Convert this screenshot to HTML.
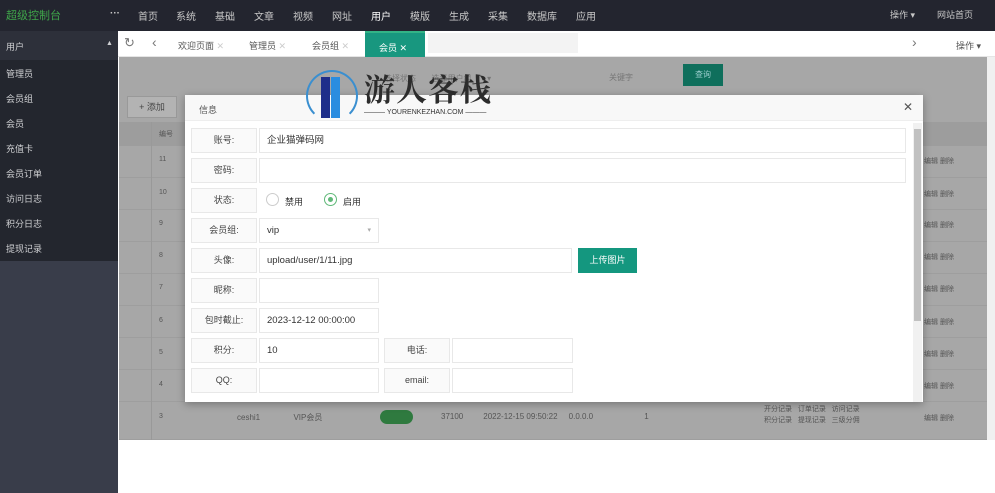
<!DOCTYPE html>
<html><head><meta charset="utf-8"><style>
*{margin:0;padding:0;box-sizing:border-box}
body{width:995px;height:493px;overflow:hidden;position:relative;background:#fff;font-family:"Liberation Sans","Noto Sans CJK SC",sans-serif;font-size:9px;color:#333}
.a{position:absolute}
.top{left:0;top:0;width:995px;height:31px;background:#23252f;color:#c8c8c8}
.top span{position:absolute;top:8px;font-size:10px}
.side{left:0;top:31px;width:118px;height:462px;background:#393d4a}
.side1{left:0;top:31px;width:118px;height:230px;background:#23262e}
.side1 div{position:absolute;left:6px;color:#cfd0d3;font-size:9px}
.tabs{left:118px;top:31px;width:877px;height:26px;background:#fff;border-bottom:1px solid #e5e5e5}
.tabs span{position:absolute;top:8px;font-size:9px;color:#555}
.gray{left:119px;top:57px;width:868px;height:383px;background:#a7a7a7}
.trow{position:absolute;left:0;width:868px;height:32px;border-bottom:1px solid #9e9e9e}
.n{position:absolute;left:40px;color:#555;font-size:7px}
.e{position:absolute;left:805px;color:#555;font-size:7px}
.modal{left:185px;top:95px;width:738px;height:307px;background:#fff;box-shadow:0 2px 8px rgba(0,0,0,.3)}
.mh{left:0;top:0;width:738px;height:26px;background:#f8f8f8;border-bottom:1px solid #eee}
.lb{position:absolute;left:6px;width:66px;height:25px;border:1px solid #e8e8e8;background:#fafafa;text-align:center;line-height:23px;font-size:9px;color:#444}
.in{position:absolute;left:74px;height:25px;border:1px solid #e8e8e8;background:#fff;line-height:23px;padding-left:7px;font-size:9.5px;color:#333}
</style></head><body>
<div class="a top">
<span style="left:6px;color:#3fa64a;font-size:11px;top:7px">超级控制台</span>
<span style="left:110px;font-weight:bold">···</span>
<span style="left:138px">首页</span><span style="left:176px">系统</span><span style="left:215px">基础</span><span style="left:254px">文章</span><span style="left:293px">视频</span><span style="left:332px">网址</span><span style="left:371px;color:#fff">用户</span><span style="left:410px">模版</span><span style="left:449px">生成</span><span style="left:488px">采集</span><span style="left:527px">数据库</span><span style="left:576px">应用</span>
<span style="left:890px;font-size:9px">操作 ▾</span><span style="left:937px;font-size:9px">网站首页</span>
</div>
<div class="a side"></div>
<div class="a side1">
<div style="top:0;left:0;width:118px;height:29px;background:#2d303a"></div>
<div style="top:9px">用户</div><div style="top:9px;left:106px;font-size:7px">▲</div>
<div style="top:36px">管理员</div><div style="top:61px">会员组</div><div style="top:86px">会员</div><div style="top:111px">充值卡</div><div style="top:136px">会员订单</div><div style="top:161px">访问日志</div><div style="top:186px">积分日志</div><div style="top:211px">提现记录</div>
</div>
<div class="a tabs">
<span style="left:6px;font-size:13px;top:4px;color:#777">↻</span>
<span style="left:34px;font-size:14px;top:3px;color:#777">‹</span>
<span style="left:60px">欢迎页面 <i style="color:#ccc;font-style:normal">✕</i></span>
<span style="left:131px">管理员 <i style="color:#ccc;font-style:normal">✕</i></span>
<span style="left:194px">会员组 <i style="color:#ccc;font-style:normal">✕</i></span>
<span style="left:247px;top:0;width:60px;height:26px;background:#18977f;color:#fff;padding:8px 0 0 14px;border-top:2px solid #33b386">会员 ✕</span>
<span style="left:310px;top:2px;width:150px;height:20px;background:#f3f3f3"></span>
<span style="left:794px;font-size:14px;top:3px;color:#777">›</span>
<span style="left:838px">操作 ▾</span>
</div>
<div class="a gray">
<div class="a" style="left:250px;top:11px;width:190px;height:20px;color:#777;font-size:8px;padding:5px 15px">选择状态 &nbsp; &nbsp; &nbsp; 选择用户组 &nbsp; &nbsp; &nbsp; ▾</div>
<div class="a" style="left:490px;top:15px;color:#777;font-size:8px">关键字</div>
<div class="a" style="left:564px;top:7px;width:40px;height:22px;background:#0f6f5c;color:#9cc;font-size:8px;text-align:center;line-height:22px">查询</div>
<div class="a" style="left:8px;top:39px;width:50px;height:22px;background:#b3b3b3;border:1px solid #999;color:#444;font-size:9px;text-align:center;line-height:20px">+ 添加</div>
<div class="a" style="left:0;top:65px;width:868px;height:24px;background:#9d9d9d"></div>
<div class="trow" style="top:89px"></div><div class="trow" style="top:121px"></div><div class="trow" style="top:153px"></div><div class="trow" style="top:185px"></div><div class="trow" style="top:217px"></div><div class="trow" style="top:249px"></div><div class="trow" style="top:281px"></div><div class="trow" style="top:313px"></div><div class="trow" style="top:345px;height:38px"></div>
<div class="a" style="left:32px;top:65px;width:1px;height:318px;background:#999"></div>
<div class="n" style="top:72px">编号</div><div class="n" style="top:99px">11</div><div class="n" style="top:132px">10</div><div class="n" style="top:163px">9</div><div class="n" style="top:195px">8</div><div class="n" style="top:227px">7</div><div class="n" style="top:260px">6</div><div class="n" style="top:292px">5</div><div class="n" style="top:324px">4</div><div class="n" style="top:356px">3</div>
<div class="e" style="top:99px">编辑 删除</div><div class="e" style="top:132px">编辑 删除</div><div class="e" style="top:163px">编辑 删除</div><div class="e" style="top:195px">编辑 删除</div><div class="e" style="top:227px">编辑 删除</div><div class="e" style="top:260px">编辑 删除</div><div class="e" style="top:292px">编辑 删除</div><div class="e" style="top:324px">编辑 删除</div><div class="e" style="top:356px">编辑 删除</div>
<div class="a" style="left:118px;top:355px;color:#555;font-size:8px">ceshi1 &nbsp; &nbsp; &nbsp; &nbsp; &nbsp; &nbsp; &nbsp; VIP会员</div>
<div class="a" style="left:261px;top:353px;width:33px;height:14px;border-radius:7px;background:#2f7a3f"></div>
<div class="a" style="left:322px;top:355px;color:#555;font-size:8px">37100 &nbsp; &nbsp; &nbsp; &nbsp; 2022-12-15 09:50:22 &nbsp; &nbsp; 0.0.0.0 &nbsp; &nbsp; &nbsp; &nbsp; &nbsp; &nbsp; &nbsp; &nbsp; &nbsp; &nbsp; &nbsp; 1</div>
<div class="a" style="left:645px;top:347px;color:#555;font-size:7px;line-height:11px">开分记录 &nbsp; 订单记录 &nbsp; 访问记录<br>积分记录 &nbsp; 提现记录 &nbsp; 三级分佣</div>
</div>
<div class="a" style="left:987px;top:57px;width:8px;height:383px;background:#f0f0f0"></div>
<div class="a modal">
<div class="a mh"><span class="a" style="left:14px;top:8px;font-size:9px;color:#555">信息</span><span class="a" style="left:718px;top:5px;font-size:12px;color:#555">✕</span></div>
<div class="a" style="left:728px;top:28px;width:9px;height:279px;background:#f1f1f1"><div style="margin:6px 1px 0;width:7px;height:192px;background:#c1c1c1"></div></div>
<div class="lb" style="top:33px">账号:</div><div class="in" style="top:33px;width:647px">企业猫弹码网</div>
<div class="lb" style="top:63px">密码:</div><div class="in" style="top:63px;width:647px"></div>
<div class="lb" style="top:93px">状态:</div>
<div class="a" style="left:81px;top:98px;width:13px;height:13px;border:1px solid #ccc;border-radius:50%"></div><span class="a" style="left:100px;top:100px">禁用</span>
<div class="a" style="left:139px;top:98px;width:13px;height:13px;border:1px solid #5fb878;border-radius:50%"><div style="margin:3px;width:5px;height:5px;border-radius:50%;background:#5fb878"></div></div><span class="a" style="left:158px;top:100px">启用</span>
<div class="lb" style="top:123px">会员组:</div><div class="in" style="top:123px;width:120px">vip<span style="position:absolute;right:7px;color:#aaa;font-size:7px">▾</span></div>
<div class="lb" style="top:153px">头像:</div><div class="in" style="top:153px;width:313px">upload/user/1/11.jpg</div>
<div class="a" style="left:393px;top:153px;width:59px;height:25px;background:#14977f;color:#fff;text-align:center;line-height:25px;font-size:9px">上传图片</div>
<div class="lb" style="top:183px">昵称:</div><div class="in" style="top:183px;width:120px"></div>
<div class="lb" style="top:213px">包时截止:</div><div class="in" style="top:213px;width:120px">2023-12-12 00:00:00</div>
<div class="lb" style="top:243px">积分:</div><div class="in" style="top:243px;width:120px">10</div>
<div class="lb" style="top:243px;left:199px">电话:</div><div class="in" style="top:243px;left:267px;width:121px"></div>
<div class="lb" style="top:273px">QQ:</div><div class="in" style="top:273px;width:120px"></div>
<div class="lb" style="top:273px;left:199px">email:</div><div class="in" style="top:273px;left:267px;width:121px"></div>
</div>
<!-- logo on top -->
<div class="a" style="left:306px;top:70px;width:52px;height:52px;border:2px solid #3a8fd0;border-radius:50%;border-bottom-color:transparent"></div>
<div class="a" style="left:321px;top:77px;width:9px;height:41px;background:#1e2e8a"></div>
<div class="a" style="left:331px;top:77px;width:9px;height:41px;background:#2a8de0"></div>
<div class="a" style="left:364px;top:68px;font-family:'Noto Serif CJK SC',serif;font-size:31px;font-weight:bold;color:#2c2c2c;letter-spacing:1px;line-height:40px">游人客栈</div>
<div class="a" style="left:364px;top:109px;font-size:7px;color:#333">——— YOURENKEZHAN.COM ———</div>
</body></html>
